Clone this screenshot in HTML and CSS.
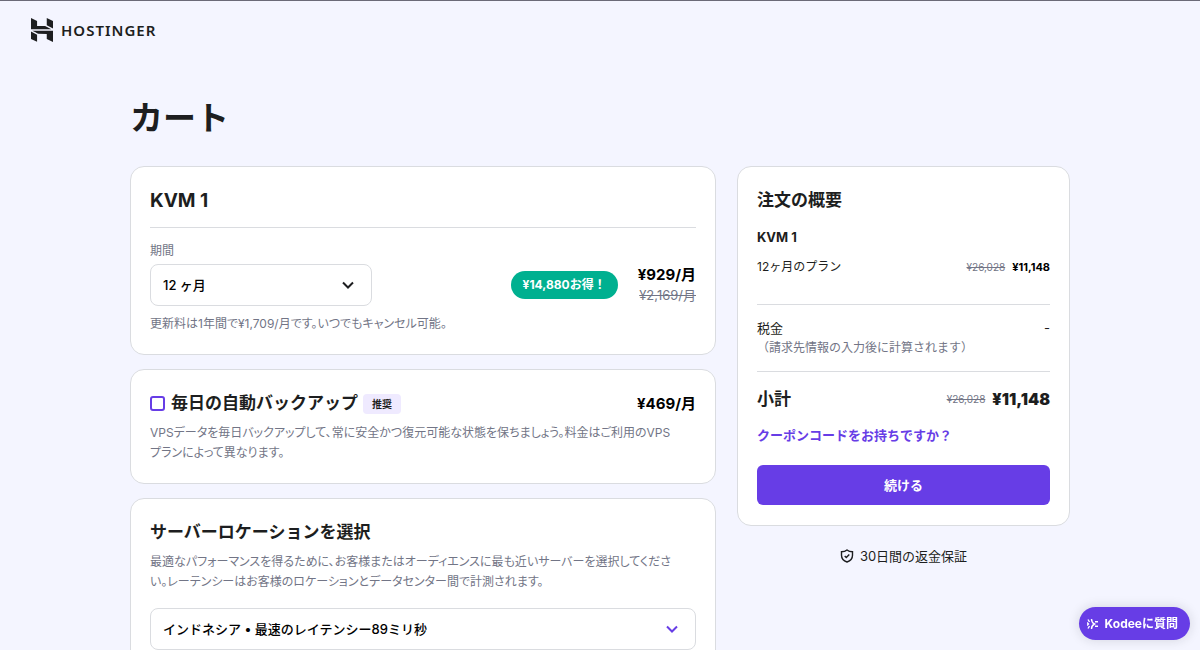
FILE: index.html
```html
<!DOCTYPE html>
<html lang="ja">
<head>
    <meta charset="UTF-8">
    <meta name="viewport" content="width=device-width, initial-scale=1.0">
    <title>カート | Hostinger</title>
    <link rel="stylesheet" href="styles.css">
</head>
<body>
    <header class="header">
        <a class="logo" href="#">
            <svg width="22" height="24" viewBox="1.8 0 20.4 24" preserveAspectRatio="none" aria-hidden="true">
                <path d="M16.415 0v7.16l5.785 3.384V2.949L16.415 0ZM1.8 0v11.237h18.815L14.89 8.09l-7.457-.003V3.024L1.8 0Zm14.615 20.894v-5.019l-7.514-.005c.007.033-5.82-3.197-5.82-3.197l19.119.091V24l-5.785-3.106ZM1.8 13.551v7.343l5.633 2.949v-6.988L1.8 13.551Z"/>
            </svg>
            <span>HOSTINGER</span>
        </a>
    </header>

    <main class="container">
        <h1>カート</h1>

        <div class="cart">
            <div class="cart-items">
                <section class="card">
                    <h2 class="plan-title">KVM 1</h2>
                    <label class="label" for="period">期間</label>
                    <div class="period-row">
                        <div class="select period-select">
                            <select id="period">
                                <option>12 ヶ月</option>
                            </select>
                            <svg width="12" height="8" viewBox="0 0 12 8" aria-hidden="true"><path d="M1 1.500 6 6.500l5-5"/></svg>
                        </div>
                        <span class="discount">¥14,880お得！</span>
                        <div class="prices">
                            <strong class="price">¥929/月</strong>
                            <del class="old-price">¥2,169/月</del>
                        </div>
                    </div>
                    <p class="note">更新料は1年間で¥1,709/月です。いつでもキャンセル可能。</p>
                </section>

                <section class="card">
                    <div class="backup-row">
                        <input type="checkbox" id="backup">
                        <label class="card-title" for="backup">毎日の自動バックアップ</label>
                        <span class="tag">推奨</span>
                        <strong class="price">¥469/月</strong>
                    </div>
                    <p class="text">VPSデータを毎日バックアップして、常に安全かつ復元可能な状態を保ちましょう。料金はご利用のVPS<br>プランによって異なります。</p>
                </section>

                <section class="card">
                    <h2 class="card-title" id="location-title">サーバーロケーションを選択</h2>
                    <p class="text">最適なパフォーマンスを得るために、お客様またはオーディエンスに最も近いサーバーを選択してくださ<br>い。レーテンシーはお客様のロケーションとデータセンター間で計測されます。</p>
                    <div class="select location-select">
                        <select aria-labelledby="location-title">
                            <option>インドネシア • 最速のレイテンシー89ミリ秒</option>
                        </select>
                        <svg width="12" height="8" viewBox="0 0 12 8" aria-hidden="true"><path d="M1 1.500 6 6.500l5-5"/></svg>
                    </div>
                </section>
            </div>

            <aside>
                <section class="card">
                    <h2 class="card-title">注文の概要</h2>
                    <h3 class="item-name">KVM 1</h3>
                    <div class="row item">
                        <span class="grow">12ヶ月のプラン</span>
                        <del>¥26,028</del>
                        <strong>¥11,148</strong>
                    </div>
                    <div class="tax">
                        <div class="row">
                            <span class="grow">税金</span>
                            <span>-</span>
                        </div>
                        <p class="tax-note">（請求先情報の入力後に計算されます）</p>
                    </div>
                    <div class="row subtotal">
                        <span class="grow">小計</span>
                        <del>¥26,028</del>
                        <strong>¥11,148</strong>
                    </div>
                    <a class="coupon" href="#">クーポンコードをお持ちですか？</a>
                    <button class="continue" type="button">続ける</button>
                </section>
                <p class="guarantee">
                    <svg width="14" height="14" viewBox="0 0 14 14" aria-hidden="true">
                        <path d="M7 1c1.500 1.200 3.300 1.700 5.500 1.700v3.500c0 3.300-2 5.600-5.500 6.800-3.500-1.200-5.500-3.500-5.500-6.800V2.700C3.700 2.700 5.500 2.200 7 1Z"/>
                        <path d="m4.700 6.900 1.600 1.600 3-3"/>
                    </svg>
                    <span>30日間の返金保証</span>
                </p>
            </aside>
        </div>
    </main>

    <button class="kodee" type="button">
        <svg width="12" height="12" viewBox="0 0 12 12" aria-hidden="true">
            <path d="M1 1.500 2.500 4M1 10.500 2.500 8M0 4.500 1.500 6 0 7.500M4.500 1C4.500 3.500 5.500 5 7.500 6 5.500 7 4.500 8.500 4.500 11M8 3.800h3M8 8.200h3"/>
        </svg>
        <span>Kodeeに質問</span>
    </button>
</body>
</html>
```
FILE: styles.css
```css
:root {
    --primary: #673de6;
    --dark: #1d1e20;
    --gray: #727586;
    --border: #dadce0;
    --bg: #f4f5ff;
    --green: #00b090;
}

* {
    box-sizing: border-box;
}

body {
    margin: 0;
    background: var(--bg);
    border-top: 1px solid #6b6a78;
    color: var(--dark);
    font-family: Inter, "Noto Sans CJK JP", sans-serif;
    font-size: 13px;
    line-height: 20px;
}

h1, h2, h3, p {
    margin: 0;
}

button, select {
    font: inherit;
    cursor: pointer;
}

svg {
    flex: none;
}

.header {
    padding: 17px 31px;
}

.logo {
    display: inline-flex;
    align-items: center;
    gap: 8px;
    height: 24px;
    color: var(--dark);
    font-family: "Noto Sans", sans-serif;
    font-size: 15px;
    font-weight: 600;
    letter-spacing: 1px;
    text-decoration: none;
    vertical-align: top;
}

.logo svg {
    fill: var(--dark);
}

.container {
    max-width: 940px;
    margin: 0 auto;
    padding: 35px 0 40px;
}

h1 {
    margin-bottom: 24px;
    font-size: 33px;
    line-height: 48px;
}

.cart {
    display: grid;
    grid-template-columns: minmax(0, 1fr) 333px;
    gap: 21px;
    align-items: start;
}

.cart-items {
    display: grid;
    gap: 14px;
}

.card {
    padding: 20px 19px;
    background: #fff;
    border: 1px solid var(--border);
    border-radius: 14px;
}

.card-title {
    font-size: 17px;
    font-weight: 700;
    line-height: 27px;
}

.plan-title {
    padding-bottom: 13px;
    border-bottom: 1px solid var(--border);
    font-size: 19px;
    line-height: 27px;
}

.label {
    display: block;
    margin: 13px 0 3px;
    color: var(--gray);
    font-size: 12px;
}

.period-row, .backup-row, .row {
    display: flex;
    align-items: center;
}

.select {
    position: relative;
}

.select select {
    width: 100%;
    height: 42px;
    padding: 0 40px 0 12px;
    appearance: none;
    background: #fff;
    border: 1px solid var(--border);
    border-radius: 8px;
    color: #000;
    font-weight: 500;
}

.select svg {
    position: absolute;
    top: 17px;
    right: 18px;
    fill: none;
    stroke: var(--dark);
    stroke-width: 2;
    pointer-events: none;
}

.period-select {
    width: 222px;
    margin-right: auto;
}

.location-select {
    margin-top: 16px;
}

.location-select svg {
    stroke: var(--primary);
}

.discount {
    padding: 4px 12px;
    background: var(--green);
    border-radius: 14px;
    color: #fff;
    font-size: 12px;
    font-weight: 700;
}

.prices {
    display: grid;
    margin-left: 20px;
    text-align: right;
}

.price {
    color: #000;
    font-size: 15px;
}

.old-price {
    color: var(--gray);
}

.note, .text, .tax-note {
    color: var(--gray);
    font-size: 12px;
}

.note, .text {
    font-feature-settings: "palt";
}

.note {
    margin-top: 8px;
}

.text {
    margin-top: 6px;
}

.backup-row input {
    width: 15px;
    height: 15px;
    margin: 0 6px 0 0;
    appearance: none;
    border: 2px solid var(--primary);
    border-radius: 3px;
}

.backup-row input:checked {
    background: var(--primary);
}

.backup-row .price {
    margin-left: auto;
}

.tag {
    margin-left: 5px;
    padding: 0 9px;
    background: #efeaff;
    border-radius: 4px;
    font-size: 10px;
    font-weight: 700;
}

.item-name {
    margin-top: 13px;
    font-size: 13px;
}

.row {
    gap: 7px;
}

.grow {
    flex: 1;
}

.row del {
    color: var(--gray);
    font-size: 10px;
}

.item {
    margin: 10px 0 27px;
    font-size: 12px;
}

.item strong {
    color: #000;
    font-size: 11px;
}

.tax {
    padding: 13px 0;
    border: 1px solid var(--border);
    border-width: 1px 0;
}

.subtotal {
    margin-top: 15px;
    font-size: 17px;
    font-weight: 700;
    line-height: 24px;
}

.subtotal del {
    font-weight: 400;
}

.subtotal strong {
    font-size: 16px;
}

.coupon {
    display: block;
    margin: 14px 0 20px;
    color: var(--primary);
    font-weight: 700;
    text-decoration: none;
}

.continue {
    display: block;
    width: 100%;
    height: 40px;
    background: var(--primary);
    border: 0;
    border-radius: 6px;
    color: #fff;
    font-weight: 700;
}

.guarantee {
    display: flex;
    align-items: center;
    justify-content: center;
    gap: 6px;
    margin-top: 20px;
}

.guarantee svg {
    fill: none;
    stroke: var(--dark);
    stroke-width: 1.4;
}

.kodee {
    position: fixed;
    right: 10px;
    bottom: 10px;
    display: flex;
    align-items: center;
    gap: 6px;
    height: 33px;
    padding: 0 12px 0 8px;
    background: var(--primary);
    border: 0;
    border-radius: 17px;
    box-shadow: 0 0 12px rgba(29, 30, 32, 0.15);
    color: #fff;
    font-size: 12px;
    font-weight: 700;
}

.kodee svg {
    fill: none;
    stroke: #fff;
    stroke-width: 1.4;
}
```
